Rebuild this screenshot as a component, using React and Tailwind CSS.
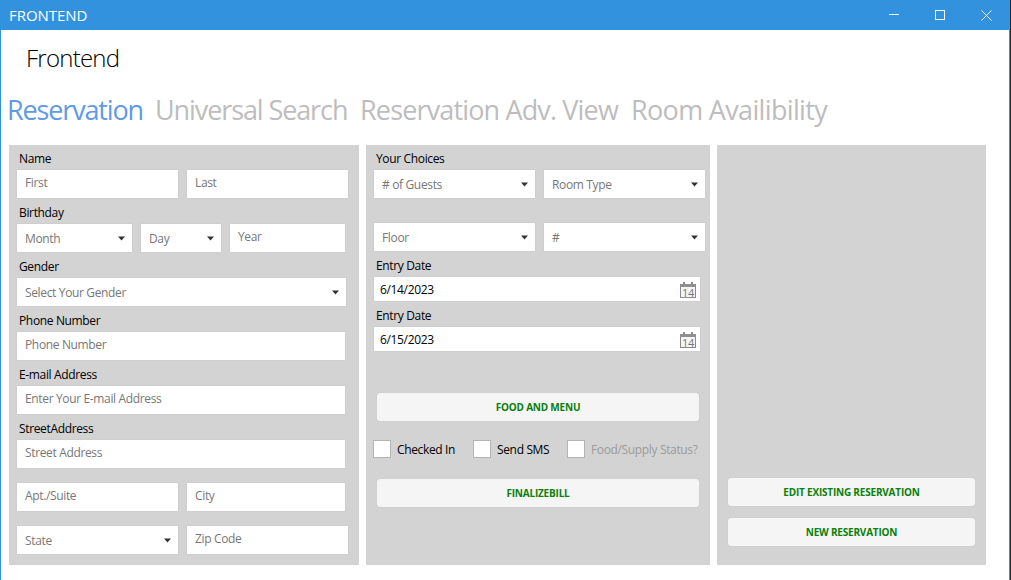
import React from 'react'

const font = "font-['Open_Sans','Noto_Sans',sans-serif]"

function Caret() {
  return (
    <svg width="7" height="5" viewBox="0 0 7 5" className="shrink-0">
      <path d="M0 0.5h7L3.5 4.5z" fill="#333" />
    </svg>
  )
}

function Label({ children, className = '' }) {
  return <div className={`h-[20px] pl-[2px] text-[12px] leading-[18px] tracking-[-0.35px] text-black ${className}`}>{children}</div>
}

function TextBox({ children, className = '' }) {
  return (
    <div className={`h-[28px] shrink-0 bg-white pl-2 pt-[5px] text-[12px] leading-[16px] tracking-[-0.35px] text-[#777] shadow-[0_0_1px_#b5b5b5] ${className}`}>
      {children}
    </div>
  )
}

function SelectBox({ children, className = '' }) {
  return (
    <div className={`flex h-[28px] shrink-0 items-center justify-between bg-white pl-2 pr-[7px] pt-[1px] text-[12px] tracking-[-0.35px] text-[#777] shadow-[0_0_1px_#b5b5b5] ${className}`}>
      <span>{children}</span>
      <Caret />
    </div>
  )
}

function DateBox({ value }) {
  return (
    <div className="flex h-[24px] w-[326px] items-center justify-between bg-white pl-[6px] pr-[3px] text-[12px] tracking-[-0.35px] text-black shadow-[0_0_1px_#b5b5b5]">
      <span className="pt-[1px]">{value}</span>
      <svg width="17" height="16" viewBox="0 0 17 16" className="mt-[1px]">
        <rect x="0.5" y="2.5" width="15" height="13" fill="#f6f6f6" stroke="#8a8a8a" />
        <rect x="0" y="2" width="16" height="3" fill="#8f8f8f" />
        <rect x="3" y="0" width="2" height="3" fill="#8f8f8f" />
        <rect x="11" y="0" width="2" height="3" fill="#8f8f8f" />
        <text x="8" y="14.5" textAnchor="middle" fontSize="11" fill="#777" fontFamily="Open Sans">14</text>
      </svg>
    </div>
  )
}

function ActionButton({ children, className = '' }) {
  return (
    <div className={`flex h-[28px] shrink-0 items-center justify-center rounded-[3px] bg-[#f5f5f5] text-[10px] font-bold tracking-[-0.2px] text-[#0a7f0a] shadow-[0_0_1px_#b5b5b5] ${className}`}>
      {children}
    </div>
  )
}

function Check({ children, className = '', muted }) {
  return (
    <div className={`flex h-[18px] items-center gap-[6px] ${className}`}>
      <div className="h-[18px] w-[18px] border border-[#b4b4b4] bg-white" />
      <span className={`pt-[1px] text-[12px] tracking-[-0.35px] ${muted ? 'text-[#9b9b9b]' : 'text-black'}`}>{children}</span>
    </div>
  )
}

export default function App() {
  return (
    <div className={`flex h-[580px] w-[1011px] overflow-hidden bg-white ${font}`}>
      <div className="w-[1010px] shrink-0">
        <div className="flex h-[30px] items-center justify-between bg-[#3392de] pl-[9px] text-white">
          <span className="text-[15px] tracking-[-0.05px]">FRONTEND</span>
          <div className="flex items-center gap-[35px] pr-[18px]">
            <svg width="11" height="11" viewBox="0 0 11 11"><path d="M0 4.5h10" stroke="#fff" /></svg>
            <svg width="11" height="11" viewBox="0 0 11 11"><rect x="0.5" y="0.5" width="9" height="9" fill="none" stroke="#fff" /></svg>
            <svg width="11" height="11" viewBox="0 0 11 11"><path d="M0.5 0.5l10 10M10.5 0.5l-10 10" stroke="#fff" /></svg>
          </div>
        </div>

        <div className="h-[550px] border-x border-x-[#3392de]">
          <div className="pl-[25px] pt-[12px] text-[24px] font-light leading-[32px] tracking-[-0.75px] text-black">Frontend</div>
          <div className="mt-[16px] flex h-[40px] items-center pl-[6px] text-[27px] text-[#bdbdbd]">
            <span className="w-[148px] tracking-[-1.15px] text-[#5f9ae4]">Reservation</span>
            <span className="w-[205px] tracking-[-1.1px]">Universal Search</span>
            <span className="w-[271px] tracking-[-0.85px]">Reservation Adv. View</span>
            <span className="tracking-[-0.66px]">Room Availibility</span>
          </div>

          <div className="mt-[15px] flex h-[420px] gap-[7px] pl-[8px]">
            {/* personal details */}
            <div className="flex w-[350px] flex-col bg-[#d3d3d3] pl-[8px] pt-[5px]">
              <Label>Name</Label>
              <div className="flex gap-[9px]">
                <TextBox className="w-[161px]">First</TextBox>
                <TextBox className="w-[161px]">Last</TextBox>
              </div>
              <Label className="mt-[6px]">Birthday</Label>
              <div className="flex gap-[9px]">
                <SelectBox className="w-[115px]">Month</SelectBox>
                <SelectBox className="w-[80px]">Day</SelectBox>
                <TextBox className="w-[115px]">Year</TextBox>
              </div>
              <Label className="mt-[6px]">Gender</Label>
              <SelectBox className="w-[329px]">Select Your Gender</SelectBox>
              <Label className="mt-[6px]">Phone Number</Label>
              <TextBox className="w-[328px]">Phone Number</TextBox>
              <Label className="mt-[6px]">E-mail Address</Label>
              <TextBox className="w-[328px]">Enter Your E-mail Address</TextBox>
              <Label className="mt-[6px]">StreetAddress</Label>
              <TextBox className="w-[328px]">Street Address</TextBox>
              <div className="mt-[15px] flex gap-[9px]">
                <TextBox className="w-[161px]">Apt./Suite</TextBox>
                <TextBox className="w-[158px]">City</TextBox>
              </div>
              <div className="mt-[15px] flex gap-[9px]">
                <SelectBox className="w-[161px]">State</SelectBox>
                <TextBox className="w-[161px]">Zip Code</TextBox>
              </div>
            </div>

            {/* reservation choices */}
            <div className="flex w-[344px] flex-col bg-[#d3d3d3] pl-[8px] pt-[5px]">
              <Label>Your Choices</Label>
              <div className="flex gap-[9px]">
                <SelectBox className="w-[161px]"># of Guests</SelectBox>
                <SelectBox className="w-[161px]">Room Type</SelectBox>
              </div>
              <div className="mt-[25px] flex gap-[9px]">
                <SelectBox className="w-[161px]">Floor</SelectBox>
                <SelectBox className="w-[161px]">#</SelectBox>
              </div>
              <Label className="mt-[6px]">Entry Date</Label>
              <DateBox value="6/14/2023" />
              <Label className="mt-[6px]">Entry Date</Label>
              <DateBox value="6/15/2023" />
              <ActionButton className="ml-[3px] mt-[42px] w-[322px]">FOOD AND MENU</ActionButton>
              <div className="mt-[19px] flex">
                <Check className="-ml-px w-[100px]">Checked In</Check>
                <Check className="w-[94px]">Send SMS</Check>
                <Check muted>Food/Supply Status?</Check>
              </div>
              <ActionButton className="ml-[3px] mt-[21px] w-[322px]">FINALIZEBILL</ActionButton>
            </div>

            {/* actions */}
            <div className="flex w-[269px] flex-col justify-end gap-[12px] bg-[#d3d3d3] pb-[19px] pl-[11px]">
              <ActionButton className="w-[247px]">EDIT EXISTING RESERVATION</ActionButton>
              <ActionButton className="w-[247px]">NEW RESERVATION</ActionButton>
            </div>
          </div>
        </div>
      </div>
      <div className="w-px bg-[#23282c]" />
    </div>
  )
}
